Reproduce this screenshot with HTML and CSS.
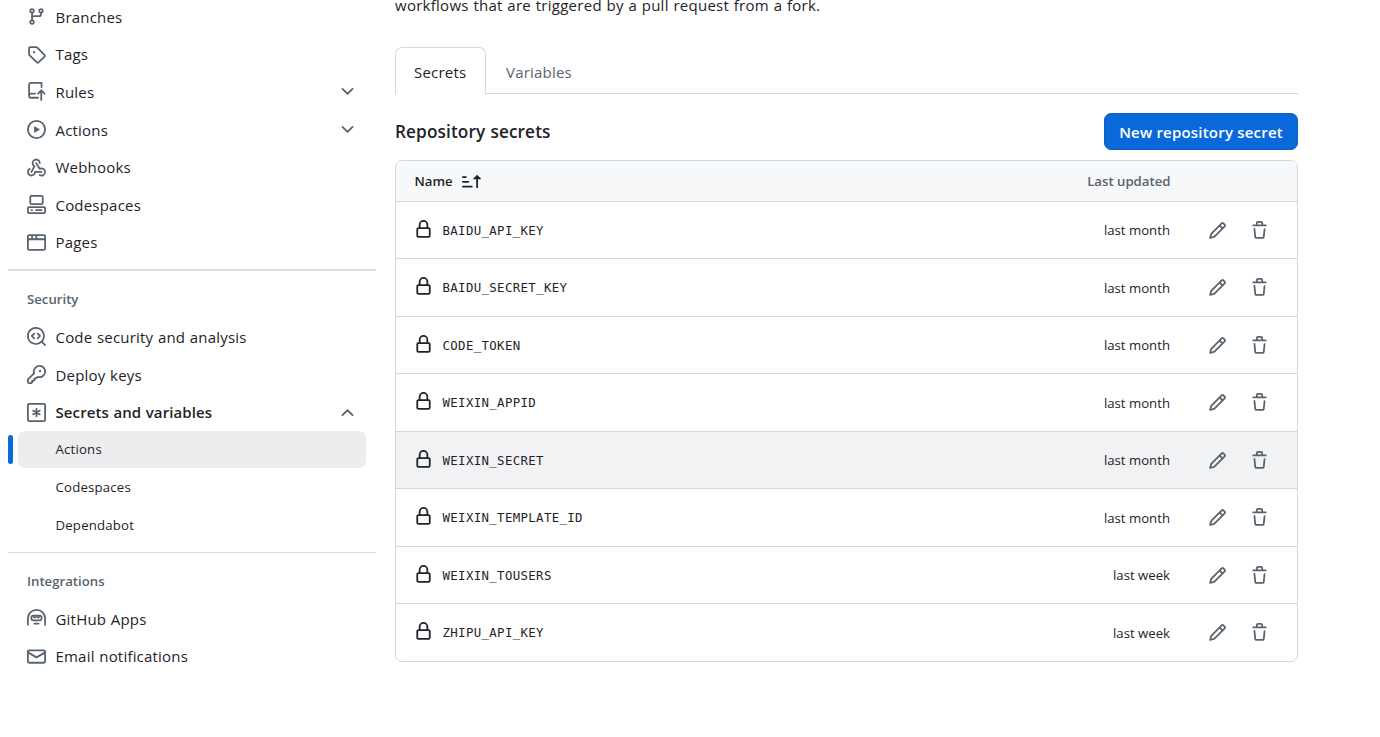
FILE: index.html
```html
<!DOCTYPE html>
<html lang="en">
<head>
<meta charset="utf-8">
<title>Actions secrets</title>
<link rel="stylesheet" href="styles.css">
</head>
<body>
<svg class="sprite" aria-hidden="true">
  <symbol id="i-branch" viewBox="0 0 16 16"><path d="M9.5 3.25a2.25 2.25 0 1 1 3 2.122V6A2.5 2.5 0 0 1 10 8.5H6a1 1 0 0 0-1 1v1.128a2.251 2.251 0 1 1-1.5 0V5.372a2.25 2.25 0 1 1 1.5 0v1.836A2.493 2.493 0 0 1 6 7h4a1 1 0 0 0 1-1v-.628A2.25 2.25 0 0 1 9.5 3.25Zm-6 0a.75.75 0 1 0 1.5 0 .75.75 0 0 0-1.5 0Zm8.25-.75a.75.75 0 1 0 0 1.5.75.75 0 0 0 0-1.5ZM4.25 12a.75.75 0 1 0 0 1.5.75.75 0 0 0 0-1.5Z"/></symbol>
  <symbol id="i-tag" viewBox="0 0 16 16"><path d="M1 7.775V2.75C1 1.784 1.784 1 2.75 1h5.025c.464 0 .91.184 1.238.513l6.25 6.25a1.75 1.75 0 0 1 0 2.474l-5.026 5.026a1.75 1.75 0 0 1-2.474 0l-6.25-6.25A1.752 1.752 0 0 1 1 7.775Zm1.5 0c0 .066.026.13.073.177l6.25 6.25a.25.25 0 0 0 .354 0l5.025-5.025a.25.25 0 0 0 0-.354l-6.25-6.25a.25.25 0 0 0-.177-.073H2.75a.25.25 0 0 0-.25.25ZM6 5a1 1 0 1 1 0 2 1 1 0 0 1 0-2Z"/></symbol>
  <symbol id="i-push" viewBox="0 0 16 16"><path d="M1 2.5A2.5 2.5 0 0 1 3.5 0h8.75a.75.75 0 0 1 .75.75v3.5a.75.75 0 0 1-1.5 0V1.5h-8a1 1 0 0 0-1 1v6.708A2.493 2.493 0 0 1 3.5 9h3.25a.75.75 0 0 1 0 1.5H3.5a1 1 0 0 0 0 2h5.75a.75.75 0 0 1 0 1.5H3.5A2.5 2.5 0 0 1 1 11.5ZM12.75 8.81v6.44a.75.75 0 0 1-1.5 0V8.81L9.78 10.28a.75.75 0 0 1-1.06-1.06l2.75-2.75a.75.75 0 0 1 1.06 0l2.75 2.75a.75.75 0 0 1-1.06 1.06Z"/></symbol>
  <symbol id="i-play" viewBox="0 0 16 16"><path d="M8 0a8 8 0 1 1 0 16A8 8 0 0 1 8 0ZM1.5 8a6.5 6.5 0 1 0 13 0 6.5 6.5 0 0 0-13 0Zm4.879-2.773 4.264 2.559a.25.25 0 0 1 0 .428l-4.264 2.559A.25.25 0 0 1 6 10.559V5.442a.25.25 0 0 1 .379-.215Z"/></symbol>
  <symbol id="i-webhook" viewBox="0 0 16 16"><path d="M5.5 4.25a2.25 2.25 0 0 1 4.5 0 .75.75 0 0 0 1.5 0 3.75 3.75 0 1 0-6.14 2.889l-2.272 4.258a.75.75 0 0 0 1.324.706L7 7.25a.75.75 0 0 0-.309-1.015A2.25 2.25 0 0 1 5.5 4.25Z"/><path d="M7.364 3.607a.75.75 0 0 1 1.03.257l2.608 4.349a3.75 3.75 0 1 1-.628 6.785.75.75 0 0 1 .752-1.299 2.25 2.25 0 1 0-.033-3.88.75.75 0 0 1-1.03-.256L7.107 4.636a.75.75 0 0 1 .257-1.03Z"/><path d="M2.9 8.776A.75.75 0 0 1 2.625 9.8 2.25 2.25 0 1 0 6 11.75a.75.75 0 0 1 .75-.751h5.5a.75.75 0 0 1 0 1.5H7.425a3.751 3.751 0 1 1-5.55-3.998.75.75 0 0 1 1.024.274Z"/></symbol>
  <symbol id="i-codespaces" viewBox="0 0 16 16"><path d="M0 11.25c0-.966.784-1.75 1.75-1.75h12.5c.966 0 1.75.784 1.75 1.75v3A1.75 1.75 0 0 1 14.25 16H1.75A1.75 1.75 0 0 1 0 14.25Zm2-9.5C2 .784 2.784 0 3.75 0h8.5C13.216 0 14 .784 14 1.75v5a1.75 1.75 0 0 1-1.75 1.75h-8.5A1.75 1.75 0 0 1 2 6.75Zm1.75-.25a.25.25 0 0 0-.25.25v5c0 .138.112.25.25.25h8.5a.25.25 0 0 0 .25-.25v-5a.25.25 0 0 0-.25-.25Zm-2 9.5a.25.25 0 0 0-.25.25v3c0 .138.112.25.25.25h12.5a.25.25 0 0 0 .25-.25v-3a.25.25 0 0 0-.25-.25Z"/><path d="M7 12.75a.75.75 0 0 1 .75-.75h4.5a.75.75 0 0 1 0 1.5h-4.5a.75.75 0 0 1-.75-.75Zm-4 0a.75.75 0 0 1 .75-.75h.5a.75.75 0 0 1 0 1.5h-.5a.75.75 0 0 1-.75-.75Z"/></symbol>
  <symbol id="i-browser" viewBox="0 0 16 16"><path d="M0 2.75C0 1.784.784 1 1.75 1h12.5c.966 0 1.75.784 1.75 1.75v10.5A1.75 1.75 0 0 1 14.25 15H1.75A1.75 1.75 0 0 1 0 13.25ZM14.5 6h-13v7.25c0 .138.112.25.25.25h12.5a.25.25 0 0 0 .25-.25Zm-6-3.5v2h6V2.75a.25.25 0 0 0-.25-.25ZM5 2.5v2h2v-2Zm-3.25 0a.25.25 0 0 0-.25.25V4.5h2v-2Z"/></symbol>
  <symbol id="i-codescan" viewBox="0 0 16 16"><path d="M8.47 4.97a.75.75 0 0 0 0 1.06L9.94 7.5 8.47 8.97a.75.75 0 1 0 1.06 1.06l2-2a.75.75 0 0 0 0-1.06l-2-2a.75.75 0 0 0-1.06 0ZM6.53 6.03a.75.75 0 0 0-1.06-1.06l-2 2a.75.75 0 0 0 0 1.06l2 2a.75.75 0 1 0 1.06-1.06L5.06 7.5l1.47-1.47Z"/><path d="M12.246 13.307a7.501 7.501 0 1 1 1.06-1.06l2.474 2.473a.749.749 0 1 1-1.06 1.06l-2.474-2.473ZM1.5 7.5a6.002 6.002 0 0 0 3.608 5.504 6.002 6.002 0 0 0 6.486-1.117.748.748 0 0 1 .292-.293A6 6 0 1 0 1.5 7.5Z"/></symbol>
  <symbol id="i-key" viewBox="0 0 16 16"><g fill="none" stroke="currentColor" stroke-width="1.5" stroke-linejoin="round"><path d="M10.5.75a4.75 4.75 0 1 1-1.5 9.25L7.6 11.25H6.3v1.4l-.6.6H4.3v1.3l-.7.7H1.75a1 1 0 0 1-1-1v-2.1L6 7a4.75 4.75 0 0 1 4.5-6.25Z"/></g><circle cx="11" cy="5" r="1"/></symbol>
  <symbol id="i-asterisk" viewBox="0 0 16 16"><g fill="none" stroke="currentColor" stroke-width="1.5" stroke-linecap="round"><rect x=".75" y=".75" width="14.5" height="14.5" rx="1.2"/><path d="M8 4.75v6.5M5.2 6.4l5.6 3.2M10.8 6.4 5.2 9.6"/></g></symbol>
  <symbol id="i-hubot" viewBox="0 0 16 16"><g fill="none" stroke="currentColor" stroke-width="1.5" stroke-linecap="round"><path d="M.75 13.25V8a7.25 7.25 0 0 1 14.5 0v5.25M6.25 12.25h3.5"/><rect x="3.75" y="5.5" width="8.5" height="4" rx="1.5"/></g><path d="M5 6h6v1L9.5 8.2 8 7 6.5 8.2 5 7Z"/></symbol>
  <symbol id="i-mail" viewBox="0 0 16 16"><path d="M1.75 2h12.5c.966 0 1.75.784 1.75 1.75v8.5A1.75 1.75 0 0 1 14.25 14H1.75A1.75 1.75 0 0 1 0 12.25v-8.5C0 2.784.784 2 1.75 2ZM1.5 12.251c0 .138.112.25.25.25h12.5a.25.25 0 0 0 .25-.25V5.809L8.38 9.397a.75.75 0 0 1-.76 0L1.5 5.809v6.442Zm13-8.181v-.32a.25.25 0 0 0-.25-.25H1.75a.25.25 0 0 0-.25.25v.32L8 7.88Z"/></symbol>
  <symbol id="i-lock" viewBox="0 0 16 16"><path d="M4 4a4 4 0 0 1 8 0v2h.25c.966 0 1.75.784 1.75 1.75v5.5A1.75 1.75 0 0 1 12.25 15h-8.5A1.75 1.75 0 0 1 2 13.25v-5.5C2 6.784 2.784 6 3.75 6H4Zm8.25 3.5h-8.5a.25.25 0 0 0-.25.25v5.5c0 .138.112.25.25.25h8.5a.25.25 0 0 0 .25-.25v-5.5a.25.25 0 0 0-.25-.25ZM10.5 6V4a2.5 2.5 0 1 0-5 0v2Z"/></symbol>
  <symbol id="i-pencil" viewBox="0 0 16 16"><path d="M11.013 1.427a1.75 1.75 0 0 1 2.474 0l1.086 1.086a1.75 1.75 0 0 1 0 2.474l-8.61 8.61c-.21.21-.47.364-.756.445l-3.251.93a.75.75 0 0 1-.927-.928l.929-3.25c.081-.286.235-.547.445-.758l8.61-8.61Zm.176 4.823L9.75 4.81l-6.286 6.287a.253.253 0 0 0-.064.108l-.558 1.953 1.953-.558a.253.253 0 0 0 .108-.064Zm1.238-3.763a.25.25 0 0 0-.354 0L10.811 3.75l1.439 1.44 1.263-1.263a.25.25 0 0 0 0-.354Z"/></symbol>
  <symbol id="i-trash" viewBox="0 0 16 16"><path d="M11 1.75V3h2.25a.75.75 0 0 1 0 1.5H2.75a.75.75 0 0 1 0-1.5H5V1.75C5 .784 5.784 0 6.75 0h2.5C10.216 0 11 .784 11 1.75ZM4.496 6.675l.66 6.6a.25.25 0 0 0 .249.225h5.19a.25.25 0 0 0 .249-.225l.66-6.6a.75.75 0 0 1 1.492.149l-.66 6.6A1.748 1.748 0 0 1 10.595 15h-5.19a1.75 1.75 0 0 1-1.741-1.575l-.66-6.6a.75.75 0 1 1 1.492-.15ZM6.5 1.75V3h3V1.75a.25.25 0 0 0-.25-.25h-2.5a.25.25 0 0 0-.25.25Z"/></symbol>
  <symbol id="i-sort" viewBox="0 0 16 16"><path d="m12.927 2.573 3 3A.25.25 0 0 1 15.75 6H13.5v6.75a.75.75 0 0 1-1.5 0V6H9.75a.25.25 0 0 1-.177-.427l3-3a.25.25 0 0 1 .354 0ZM0 12.25a.75.75 0 0 1 .75-.75h7.5a.75.75 0 0 1 0 1.5H.75a.75.75 0 0 1-.75-.75Zm0-4a.75.75 0 0 1 .75-.75h4.5a.75.75 0 0 1 0 1.5H.75A.75.75 0 0 1 0 8.25Zm0-4a.75.75 0 0 1 .75-.75h2.5a.75.75 0 0 1 0 1.5H.75A.75.75 0 0 1 0 4.25Z"/></symbol>
  <symbol id="i-chevron" viewBox="0 0 16 16"><path d="M12.78 5.22a.749.749 0 0 1 0 1.06l-4.25 4.25a.749.749 0 0 1-1.06 0L3.22 6.28a.749.749 0 1 1 1.06-1.06L8 8.939l3.72-3.719a.749.749 0 0 1 1.06 0Z"/></symbol>
</svg>
<div class="page">
  <nav class="sidebar">
    <a class="item"><svg class="icon"><use href="#i-branch"/></svg><span>Branches</span></a>
    <a class="item"><svg class="icon"><use href="#i-tag"/></svg><span>Tags</span></a>
    <a class="item"><svg class="icon"><use href="#i-push"/></svg><span>Rules</span><svg class="icon chevron"><use href="#i-chevron"/></svg></a>
    <a class="item"><svg class="icon"><use href="#i-play"/></svg><span>Actions</span><svg class="icon chevron"><use href="#i-chevron"/></svg></a>
    <a class="item"><svg class="icon"><use href="#i-webhook"/></svg><span>Webhooks</span></a>
    <a class="item"><svg class="icon"><use href="#i-codespaces"/></svg><span>Codespaces</span></a>
    <a class="item"><svg class="icon"><use href="#i-browser"/></svg><span>Pages</span></a>
    <h2 class="group group-first">Security</h2>
    <a class="item"><svg class="icon"><use href="#i-codescan"/></svg><span>Code security and analysis</span></a>
    <a class="item"><svg class="icon"><use href="#i-key"/></svg><span>Deploy keys</span></a>
    <a class="item open"><svg class="icon"><use href="#i-asterisk"/></svg><span>Secrets and variables</span><svg class="icon chevron up"><use href="#i-chevron"/></svg></a>
    <a class="subitem current"><span>Actions</span></a>
    <a class="subitem"><span>Codespaces</span></a>
    <a class="subitem"><span>Dependabot</span></a>
    <h2 class="group">Integrations</h2>
    <a class="item"><svg class="icon"><use href="#i-hubot"/></svg><span>GitHub Apps</span></a>
    <a class="item"><svg class="icon"><use href="#i-mail"/></svg><span>Email notifications</span></a>
  </nav>
  <main class="main">
    <p class="intro">workflows that are triggered by a pull request from a fork.</p>
    <div class="tabs"><a class="tab selected">Secrets</a><a class="tab">Variables</a></div>
    <div class="heading"><h1 class="title">Repository secrets</h1><button class="primary">New repository secret</button></div>
    <section class="table">
      <div class="row head"><span class="name-head">Name<svg class="icon"><use href="#i-sort"/></svg></span><span class="updated">Last updated</span></div>
      <div class="row"><svg class="icon lock"><use href="#i-lock"/></svg><code class="name">BAIDU_API_KEY</code><span class="updated">last month</span><svg class="icon edit"><use href="#i-pencil"/></svg><svg class="icon"><use href="#i-trash"/></svg></div>
      <div class="row"><svg class="icon lock"><use href="#i-lock"/></svg><code class="name">BAIDU_SECRET_KEY</code><span class="updated">last month</span><svg class="icon edit"><use href="#i-pencil"/></svg><svg class="icon"><use href="#i-trash"/></svg></div>
      <div class="row"><svg class="icon lock"><use href="#i-lock"/></svg><code class="name">CODE_TOKEN</code><span class="updated">last month</span><svg class="icon edit"><use href="#i-pencil"/></svg><svg class="icon"><use href="#i-trash"/></svg></div>
      <div class="row"><svg class="icon lock"><use href="#i-lock"/></svg><code class="name">WEIXIN_APPID</code><span class="updated">last month</span><svg class="icon edit"><use href="#i-pencil"/></svg><svg class="icon"><use href="#i-trash"/></svg></div>
      <div class="row hovered"><svg class="icon lock"><use href="#i-lock"/></svg><code class="name">WEIXIN_SECRET</code><span class="updated">last month</span><svg class="icon edit"><use href="#i-pencil"/></svg><svg class="icon"><use href="#i-trash"/></svg></div>
      <div class="row"><svg class="icon lock"><use href="#i-lock"/></svg><code class="name">WEIXIN_TEMPLATE_ID</code><span class="updated">last month</span><svg class="icon edit"><use href="#i-pencil"/></svg><svg class="icon"><use href="#i-trash"/></svg></div>
      <div class="row"><svg class="icon lock"><use href="#i-lock"/></svg><code class="name">WEIXIN_TOUSERS</code><span class="updated">last week</span><svg class="icon edit"><use href="#i-pencil"/></svg><svg class="icon"><use href="#i-trash"/></svg></div>
      <div class="row"><svg class="icon lock"><use href="#i-lock"/></svg><code class="name">ZHIPU_API_KEY</code><span class="updated">last week</span><svg class="icon edit"><use href="#i-pencil"/></svg><svg class="icon"><use href="#i-trash"/></svg></div>
    </section>
  </main>
</div>
</body>
</html>
```
FILE: styles.css
```css
* { box-sizing: border-box; }
body {
  margin: 0;
  height: 737px;
  overflow: hidden;
  background: #fff;
  color: #1f2328;
  font: 15px/24px "Open Sans", "Noto Sans", sans-serif;
  letter-spacing: .2px;
  word-spacing: .5px;
}
h1, h2, p { margin: 0; }
.sprite { display: none; }
.page { display: flex; gap: 19px; height: 737px; padding-left: 8px; overflow: hidden; }
.icon { width: 19px; height: 19px; flex: none; color: #59636e; fill: currentColor; }

.sidebar { width: 368px; flex: none; margin-top: -2px; }
.item { display: flex; align-items: center; height: 37.6px; padding: 0 19px; }
.item span { margin-left: 9.5px; flex: 1; white-space: nowrap; }
.open { font-weight: 600; letter-spacing: .1px; }
.up { transform: rotate(180deg); }
.group {
  height: 48px;
  margin-top: 8px;
  padding: 16px 19px 0;
  border-top: 1px solid #d8dee4;
  color: #59636e;
  font-size: 13.2px;
  font-weight: 600;
  letter-spacing: 0;
}
.group-first { height: 49px; border-top-width: 2px; }
.subitem { display: flex; align-items: center; height: 37.6px; margin: 0 10px; padding-left: 37.5px; border-radius: 7px; font-size: 13.2px; }
.current { position: relative; height: 37px; margin-bottom: .6px; background: #ecedef; }
.current::before { content: ""; position: absolute; left: -10px; top: 4px; width: 5px; height: 29px; border-radius: 3px; background: #0969da; }

.main { width: 903px; flex: none; }
.intro { height: 48px; margin-top: -7px; letter-spacing: .27px; }
.tabs { display: flex; height: 47px; margin-top: 6px; border-bottom: 1px solid #d1d9e0; }
.tab { height: 47px; padding: 13px 20px 0; color: #59636e; }
.selected { width: 91px; padding: 12px 0 0 18px; border: 1px solid #d1d9e0; border-bottom: 0; border-radius: 7px 7px 0 0; background: #fff; color: #1f2328; }
.heading { display: flex; justify-content: space-between; align-items: center; height: 66px; padding-top: 9px; }
.title { font-size: 17.2px; font-weight: 600; letter-spacing: .12px; }
.primary { width: 194px; height: 37px; padding: 0; border: 1px solid #1160bd; border-radius: 7px; background: #0969da; color: #fff; font: 600 15px "Open Sans", sans-serif; letter-spacing: .2px; }
.table { border: 1px solid #d1d9e0; border-radius: 7px; overflow: hidden; letter-spacing: 0; word-spacing: 0; }
.row { display: flex; align-items: center; height: 57px; padding: 0 28px 0 18px; border-bottom: 1px solid #d1d9e0; font-size: 13.2px; }
.row:nth-child(odd) { height: 58px; }
.row.head { height: 41px; background: #f6f8fa; font-weight: 600; }
.row:last-child { border-bottom: 0; height: 57px; }
.hovered { background: #f1f2f4; }
.name-head { display: flex; align-items: center; gap: 9px; flex: 1; padding-left: .5px; }
.name-head .icon, .lock { color: #1f2328; }
.lock { margin-bottom: 2px; }
.name { flex: 1; margin-left: 9.5px; font: 12.4px "DejaVu Sans Mono", monospace; letter-spacing: .34px; }
.head .updated { margin-right: 98.5px; color: #59636e; }
.edit { margin: 0 23px 0 38px; }
```
